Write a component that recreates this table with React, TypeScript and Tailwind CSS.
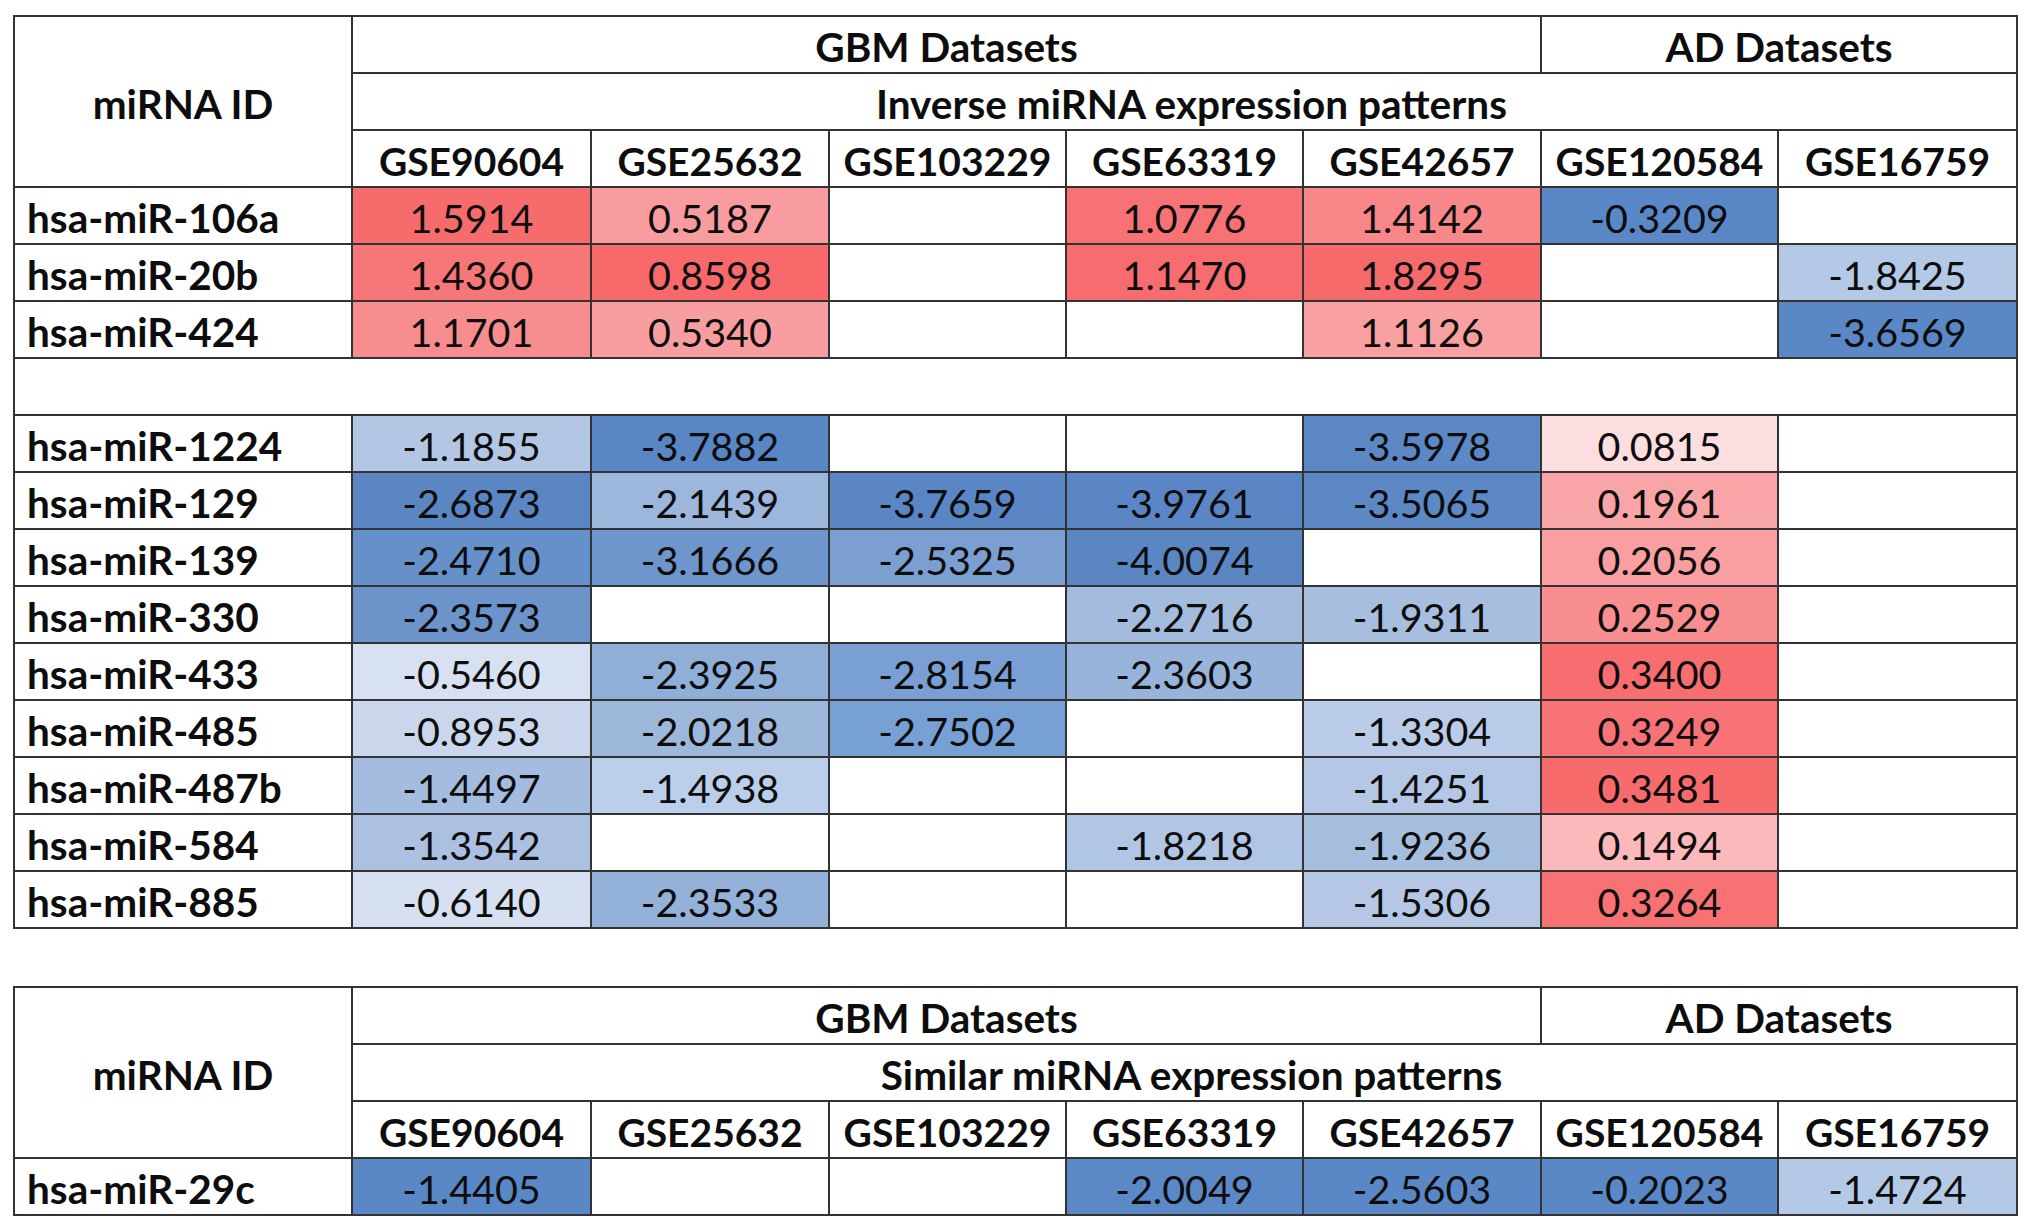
import React from "react";

type Cell = [string, string] | null;
type Row = [string, Cell[]];

const datasets = ["GSE90604", "GSE25632", "GSE103229", "GSE63319", "GSE42657", "GSE120584", "GSE16759"];

const upRows: Row[] = [
    ["hsa-miR-106a", [["1.5914", "bg-[#f66b6c]"], ["0.5187", "bg-[#f99c9f]"], null, ["1.0776", "bg-[#f77275]"], ["1.4142", "bg-[#f8878a]"], ["-0.3209", "bg-[#5a88c6]"], null]],
    ["hsa-miR-20b", [["1.4360", "bg-[#f77678]"], ["0.8598", "bg-[#f8696b]"], null, ["1.1470", "bg-[#f76c6e]"], ["1.8295", "bg-[#f76a6c]"], null, ["-1.8425", "bg-[#b4c9e6]"]]],
    ["hsa-miR-424", [["1.1701", "bg-[#f88d90]"], ["0.5340", "bg-[#f99ea0]"], null, null, ["1.1126", "bg-[#f9a0a2]"], null, ["-3.6569", "bg-[#5a88c6]"]]],
];

const downRows: Row[] = [
    ["hsa-miR-1224", [["-1.1855", "bg-[#b3c7e4]"], ["-3.7882", "bg-[#5986c4]"], null, null, ["-3.5978", "bg-[#5c88c6]"], ["0.0815", "bg-[#fcdde0]"], null]],
    ["hsa-miR-129", [["-2.6873", "bg-[#5b86c4]"], ["-2.1439", "bg-[#9db6dc]"], ["-3.7659", "bg-[#5b86c5]"], ["-3.9761", "bg-[#5b86c5]"], ["-3.5065", "bg-[#5d88c6]"], ["0.1961", "bg-[#f9a4a7]"], null]],
    ["hsa-miR-139", [["-2.4710", "bg-[#6690ca]"], ["-3.1666", "bg-[#6e95cc]"], ["-2.5325", "bg-[#7c9fd2]"], ["-4.0074", "bg-[#5a86c4]"], null, ["0.2056", "bg-[#f99fa1]"], null]],
    ["hsa-miR-330", [["-2.3573", "bg-[#6c93ca]"], null, null, ["-2.2716", "bg-[#a3bcdd]"], ["-1.9311", "bg-[#a7bedf]"], ["0.2529", "bg-[#f88e90]"], null]],
    ["hsa-miR-433", [["-0.5460", "bg-[#d8e1f1]"], ["-2.3925", "bg-[#8fafd9]"], ["-2.8154", "bg-[#799fd4]"], ["-2.3603", "bg-[#98b4db]"], null, ["0.3400", "bg-[#f86e70]"], null]],
    ["hsa-miR-485", [["-0.8953", "bg-[#c9d6ec]"], ["-2.0218", "bg-[#9eb8dc]"], ["-2.7502", "bg-[#77a0d5]"], null, ["-1.3304", "bg-[#bacce8]"], ["0.3249", "bg-[#f87375]"], null]],
    ["hsa-miR-487b", [["-1.4497", "bg-[#a4bcdf]"], ["-1.4938", "bg-[#bbceea]"], null, null, ["-1.4251", "bg-[#b4c7e5]"], ["0.3481", "bg-[#f86b6d]"], null]],
    ["hsa-miR-584", [["-1.3542", "bg-[#acc1e1]"], null, null, ["-1.8218", "bg-[#b1c6e4]"], ["-1.9236", "bg-[#a6bede]"], ["0.1494", "bg-[#fbb9bc]"], null]],
    ["hsa-miR-885", [["-0.6140", "bg-[#d6e0f0]"], ["-2.3533", "bg-[#94b1da]"], null, null, ["-1.5306", "bg-[#b5c7e5]"], ["0.3264", "bg-[#f87274]"], null]],
];

const similarRows: Row[] = [
    ["hsa-miR-29c", [["-1.4405", "bg-[#5a88c6]"], null, null, ["-2.0049", "bg-[#5b88c6]"], ["-2.5603", "bg-[#5a88c6]"], ["-0.2023", "bg-[#5a88c6]"], ["-1.4724", "bg-[#b4c9e6]"]]],
];

// shared cell look: dark grid lines, text nudged down a touch
const cellBorder = "border-2 border-[#333] pt-[5px]";
const bold = "font-bold text-[40.5px]";

const Cols = () => (
    <colgroup>
        <col className="w-[338px]" />
        <col className="w-[239px]" />
        <col className="w-[238px]" />
        <col className="w-[237px]" />
        <col className="w-[237px]" />
        <col className="w-[238px]" />
        <col className="w-[237px]" />
        <col className="w-[239px]" />
    </colgroup>
);

const Header = ({ subtitle }: { subtitle: string }) => (
    <thead>
        <tr className="h-[57px]">
            <th rowSpan={3} className={`${cellBorder} ${bold} text-center`}>miRNA ID</th>
            <th colSpan={5} className={`${cellBorder} ${bold} text-center`}>GBM Datasets</th>
            <th colSpan={2} className={`${cellBorder} ${bold} text-center`}>AD Datasets</th>
        </tr>
        <tr className="h-[57px]">
            <th colSpan={7} className={`${cellBorder} ${bold} text-center pl-[14px]`}>{subtitle}</th>
        </tr>
        <tr className="h-[57px]">
            {datasets.map((d) => (
                <th key={d} className={`${cellBorder} font-bold text-[39px] text-center`}>{d}</th>
            ))}
        </tr>
    </thead>
);

const DataRow = ({ row }: { row: Row }) => (
    <tr className="h-[57px]">
        <td className={`${cellBorder} ${bold} text-left pl-[12px]`}>{row[0]}</td>
        {row[1].map((c, i) => (
            <td key={i} className={`${cellBorder} text-center ${c ? c[1] : "bg-white"}`}>
                {c ? c[0] : ""}
            </td>
        ))}
    </tr>
);

const tableClass = "table-fixed border-collapse w-[2003px] text-[39.5px] leading-none text-[#0d0d0d] font-['Lato','Open_Sans',sans-serif]";

export default function App() {
    return (
        <div className="min-h-screen bg-white pt-[15px] pl-[13px]">
            <table className={tableClass}>
                <Cols />
                <Header subtitle="Inverse miRNA expression patterns" />
                <tbody>
                    {upRows.map((r) => (
                        <DataRow key={r[0]} row={r} />
                    ))}
                    <tr className="h-[57px]">
                        <td colSpan={8} className={cellBorder}></td>
                    </tr>
                    {downRows.map((r) => (
                        <DataRow key={r[0]} row={r} />
                    ))}
                </tbody>
            </table>

            <table className={`${tableClass} mt-[57px]`}>
                <Cols />
                <Header subtitle="Similar miRNA expression patterns" />
                <tbody>
                    {similarRows.map((r) => (
                        <DataRow key={r[0]} row={r} />
                    ))}
                </tbody>
            </table>
        </div>
    );
}
